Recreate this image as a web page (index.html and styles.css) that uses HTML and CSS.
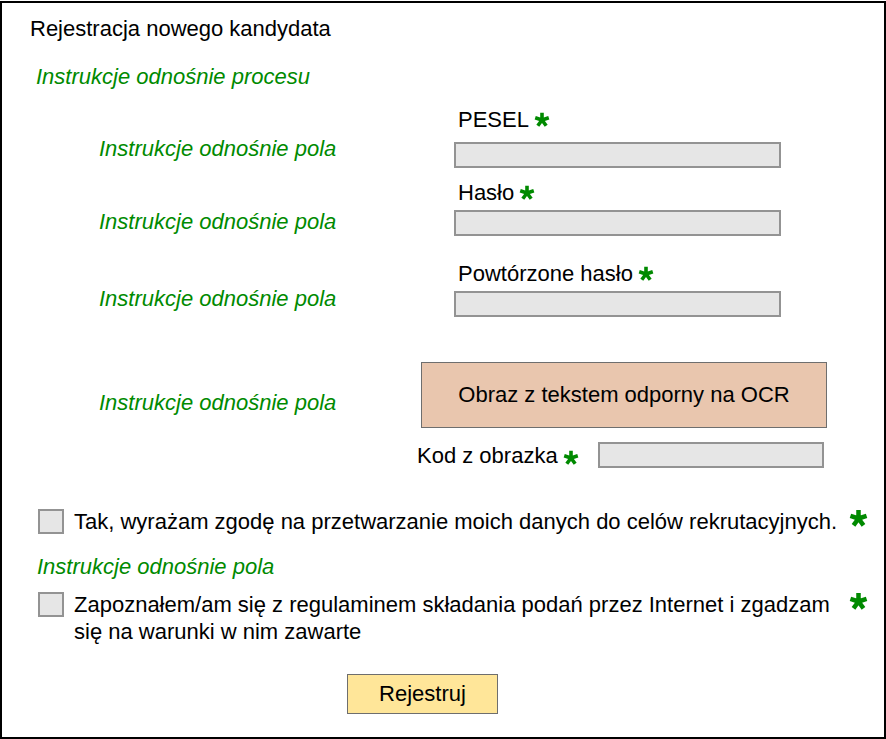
FILE: index.html
```html
<!DOCTYPE html>
<html lang="pl">
<head>
    <meta charset="UTF-8">
    <meta name="viewport" content="width=device-width, initial-scale=1.0">
    <title>Rejestracja nowego kandydata</title>
    <link rel="stylesheet" href="styles.css">
</head>
<body>
    <div class="frame">
        <h1 class="title">Rejestracja nowego kandydata</h1>
        <p class="hint hint-process">Instrukcje odnośnie procesu</p>

        <form class="register-form" onsubmit="return false">
            <div class="field-row row-pesel">
                <p class="hint">Instrukcje odnośnie pola</p>
                <div class="field">
                    <label class="field-label" for="pesel">PESEL
                        <svg class="req" viewBox="-8 -8 16 16"><path d="M0 0V-7.2M0 0L6.8-2.2M0 0L4.2 5.8M0 0L-4.2 5.8M0 0L-6.8-2.2"/></svg>
                    </label>
                    <input type="text" id="pesel" class="text-input">
                </div>
            </div>

            <div class="field-row row-password">
                <p class="hint">Instrukcje odnośnie pola</p>
                <div class="field">
                    <label class="field-label" for="password">Hasło
                        <svg class="req" viewBox="-8 -8 16 16"><path d="M0 0V-7.2M0 0L6.8-2.2M0 0L4.2 5.8M0 0L-4.2 5.8M0 0L-6.8-2.2"/></svg>
                    </label>
                    <input type="password" id="password" class="text-input">
                </div>
            </div>

            <div class="field-row row-repeat">
                <p class="hint">Instrukcje odnośnie pola</p>
                <div class="field">
                    <label class="field-label" for="password2">Powtórzone hasło
                        <svg class="req" viewBox="-8 -8 16 16"><path d="M0 0V-7.2M0 0L6.8-2.2M0 0L4.2 5.8M0 0L-4.2 5.8M0 0L-6.8-2.2"/></svg>
                    </label>
                    <input type="password" id="password2" class="text-input">
                </div>
            </div>

            <div class="captcha-row">
                <p class="hint">Instrukcje odnośnie pola</p>
                <div class="captcha">
                    <div class="ocr-box">Obraz z tekstem odporny na OCR</div>
                    <div class="code-line">
                        <label class="field-label" for="code">Kod z obrazka
                            <svg class="req" viewBox="-8 -8 16 16"><path d="M0 0V-7.2M0 0L6.8-2.2M0 0L4.2 5.8M0 0L-4.2 5.8M0 0L-6.8-2.2"/></svg>
                        </label>
                        <input type="text" id="code" class="text-input code-input">
                    </div>
                </div>
            </div>

            <div class="consent consent-data">
                <input type="checkbox" id="agree-data" class="check">
                <label for="agree-data" class="consent-text">Tak, wyrażam zgodę na przetwarzanie moich danych do celów rekrutacyjnych.</label>
                <svg class="req req-big" viewBox="-8 -8 16 16"><path d="M0 0V-7.2M0 0L6.8-2.2M0 0L4.2 5.8M0 0L-4.2 5.8M0 0L-6.8-2.2"/></svg>
            </div>

            <p class="hint hint-consent">Instrukcje odnośnie pola</p>

            <div class="consent consent-rules">
                <input type="checkbox" id="agree-rules" class="check">
                <label for="agree-rules" class="consent-text">Zapoznałem/am się z regulaminem składania podań przez Internet i zgadzam się na warunki w nim zawarte</label>
                <svg class="req req-big" viewBox="-8 -8 16 16"><path d="M0 0V-7.2M0 0L6.8-2.2M0 0L4.2 5.8M0 0L-4.2 5.8M0 0L-6.8-2.2"/></svg>
            </div>

            <div class="actions">
                <button type="submit" class="register-btn">Rejestruj</button>
            </div>
        </form>
    </div>
</body>
</html>
```

FILE: styles.css
```css
body {
    margin: 0;
    padding-top: 1px;
    font-family: "Liberation Sans", Arial, sans-serif;
    font-size: 22px;
    color: #000;
    background: #fff;
}
p {
    margin: 0;
}
.frame {
    width: 886px;
    height: 738px;
    box-sizing: border-box;
    border: 2px solid #000;
    padding-top: 14px;
}
.title {
    margin: 0 0 0 28px;
    font-size: 22px;
    font-weight: normal;
    line-height: 23px;
}
.hint {
    color: #008a00;
    font-style: italic;
    line-height: 23px;
}
.hint-process {
    margin: 25px 0 0 34px;
}
.register-form {
    margin: 0;
}

/* text fields: hint on the left, label + input on the right */
.field-row {
    display: grid;
    grid-template-columns: 452px 1fr;
    align-items: start;
}
.field-row .hint,
.captcha-row .hint {
    padding-left: 97px;
    margin-top: 29px;
}
.row-pesel {
    margin-top: 20px;
}
.row-password {
    margin-top: 13px;
}
.row-repeat {
    margin-top: 26px;
}
.row-repeat .hint {
    margin-top: 25px;
}
.field-label {
    display: flex;
    align-items: center;
    gap: 5px;
    line-height: 23px;
    padding-left: 4px;
}
.req {
    width: 16px;
    height: 16px;
    flex-shrink: 0;
    fill: none;
    stroke: #008a00;
    stroke-width: 3.6;
}
.req-big {
    width: 19px;
    height: 19px;
    margin-top: 1px;
    margin-left: 3px;
    stroke-width: 3.8;
}
.text-input {
    display: block;
    width: 327px;
    height: 26px;
    box-sizing: border-box;
    margin: 6px 0 0 0;
    border: 2px solid #939393;
    background: #e6e6e6;
    font: inherit;
    padding: 0 6px;
}
.row-pesel .text-input {
    margin-top: 11px;
}

/* captcha */
.captcha-row {
    display: grid;
    grid-template-columns: 419px 406px;
    align-items: start;
    margin-top: 45px;
}
.ocr-box {
    height: 66px;
    box-sizing: border-box;
    border: 1px solid #6e6e6e;
    background: #e9c6ae;
    display: flex;
    align-items: center;
    justify-content: center;
}
.code-line {
    display: flex;
    align-items: center;
    width: 407px;
    margin: 14px 0 0 -4px;
}
.code-line .field-label {
    padding-left: 0;
}
.code-line .req {
    margin-top: 6px;
}
.code-input {
    width: 226px;
    margin: 0 0 0 auto;
}

/* consents */
.consent {
    display: flex;
    align-items: flex-start;
    padding: 0 16px 0 36px;
}
.consent-data {
    margin-top: 40px;
}
.consent-rules {
    margin-top: 13px;
}
.check {
    appearance: none;
    -webkit-appearance: none;
    width: 26px;
    height: 25px;
    margin: 1px 10px 0 0;
    flex-shrink: 0;
    box-sizing: border-box;
    border: 2px solid #939393;
    background: #e6e6e6;
}
.consent-text {
    flex: 1;
    line-height: 27px;
}
.hint-consent {
    margin: 20px 0 0 35px;
}
.actions {
    margin: 29px 0 0 345px;
}
.register-btn {
    width: 151px;
    height: 40px;
    border: 1px solid #6e6e6e;
    background: #ffe699;
    font: inherit;
    color: #000;
    cursor: pointer;
}
```
